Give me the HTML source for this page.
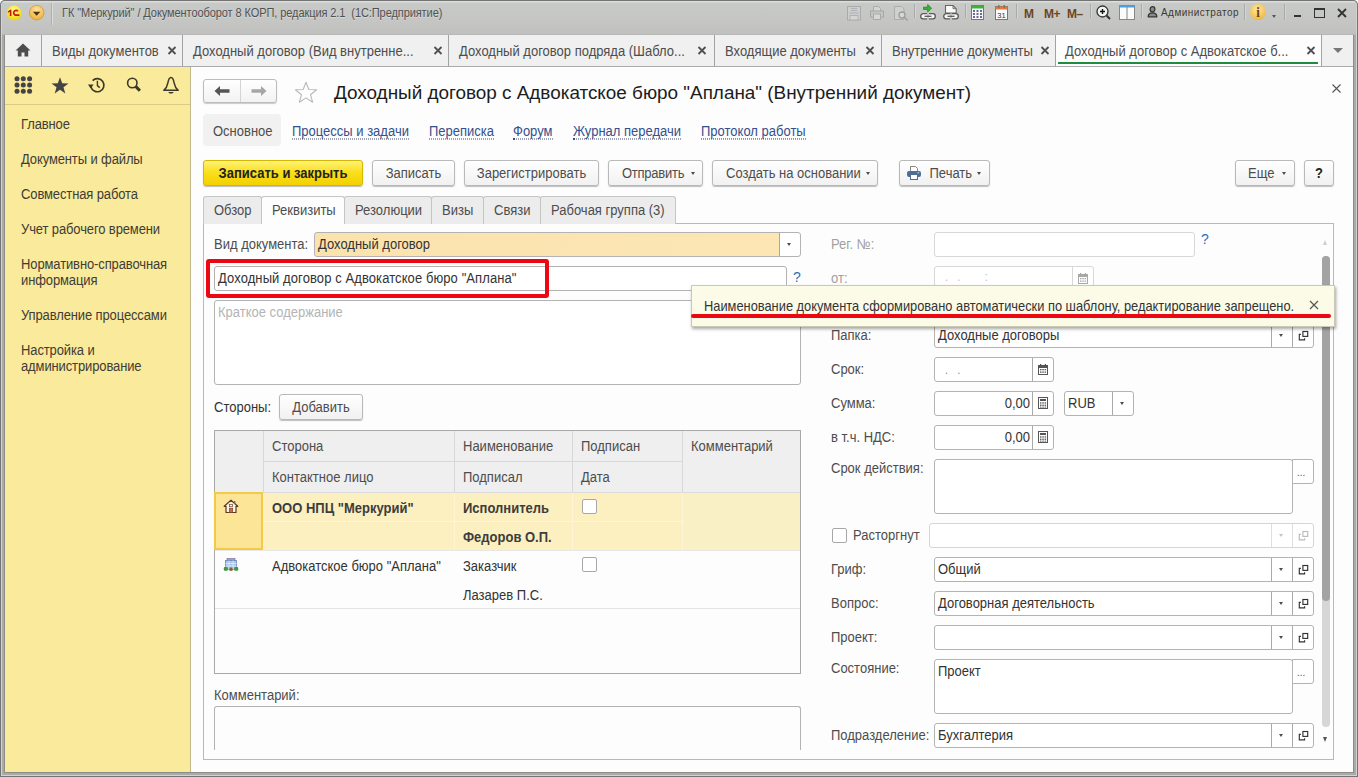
<!DOCTYPE html>
<html><head><meta charset="utf-8">
<style>
*{box-sizing:border-box;margin:0;padding:0}
html,body{width:1358px;height:777px;overflow:hidden;background:#fff}
body{position:relative;background:#fff;font-family:"Liberation Sans",sans-serif;font-size:13px;color:#4d4d4d}
.a{position:absolute}
.t{position:absolute;white-space:nowrap;line-height:16px;transform:translateY(0.8px) scaleY(1.1)}
#frame{left:0;top:0;width:1358px;height:777px;background:#a9abab;border-radius:5px 5px 0 0;box-shadow:inset 0 0 0 1px #747474,inset 0 0 0 2px #d2d4d4}
#titlebar{left:2px;top:1px;width:1354px;height:34px;background:linear-gradient(#dcdedc 0,#dcdedc 1px,#c8cac7 2px,#c5c6c4 60%,#c0c1bf 100%);border-bottom:1px solid #b7b8b6;border-radius:4px 4px 0 0}
#inner{left:4px;top:35px;width:1350px;height:738px;background:#8d8d86}
#tabbar{left:5px;top:35px;width:1348px;height:32px;background:#f0f0f0;border-bottom:1px solid #ababab}
.tsep{position:absolute;top:0;width:1px;height:31px;background:#a2a2a2}
#sidebar{left:5px;top:67px;width:186px;height:705px;background:#faea9b;border-right:1px solid #c2b98e}
#main{left:191px;top:67px;width:1162px;height:705px;background:#fdfdfd}
.btn{position:absolute;height:26px;border:1px solid #b9b9b9;border-radius:3px;background:linear-gradient(#ffffff,#f1f1f1);box-shadow:0 1px 1px rgba(0,0,0,.25);text-align:center;line-height:23px;color:#4d4d4d}
.fld{position:absolute;height:24px;border:1px solid #b3b3b3;border-radius:3px;background:#fff}
.lbl{position:absolute;white-space:nowrap;line-height:16px;color:#4d4d4d;transform:translateY(0.8px) scaleY(1.1)}
.lnk{position:absolute;white-space:nowrap;color:#34508e;line-height:13px;border-bottom:1px dotted #3e4c78;transform:translateY(0.8px) scaleY(1.1)}
.tab>span,.btn>span{display:inline-block;transform:translateY(0.8px) scaleY(1.1)}
.tab{position:absolute;top:196px;height:28px;border:1px solid #c5c5c5;border-bottom:none;border-radius:3px 3px 0 0;background:#ececec;text-align:center;line-height:26px;color:#4d4d4d}
.dd{position:absolute;width:0;height:0;border-left:2.6px solid transparent;border-right:2.6px solid transparent;border-top:3.2px solid #4d4d4d}
</style></head><body>
<div id="frame" class="a"></div>
<div id="titlebar" class="a"></div>
<div id="inner" class="a"></div>
<div id="tabbar" class="a"></div>
<div id="sidebar" class="a"></div>
<div id="main" class="a"></div>

<!-- TITLE BAR CONTENT -->
<svg class="a" style="left:5px;top:4px" width="18" height="18" viewBox="0 0 18 18"><defs><radialGradient id="g1" cx="50%" cy="35%" r="60%"><stop offset="0" stop-color="#fffbb0"/><stop offset=".6" stop-color="#f8ea40"/><stop offset="1" stop-color="#f0d818"/></radialGradient><radialGradient id="g2" cx="50%" cy="30%" r="65%"><stop offset="0" stop-color="#fde2a0"/><stop offset=".7" stop-color="#f6c25a"/><stop offset="1" stop-color="#eeb040"/></radialGradient></defs><circle cx="9" cy="8.9" r="7.4" fill="url(#g1)"/><path d="M2.9 7.4L5.1 5.8h1.3v6.1H4.8V7.8L2.9 8.7z" fill="#c01404"/><path d="M12.9 7.3A2.4 2.4 0 1 0 10.3 11.1H14.4" fill="none" stroke="#c81a08" stroke-width="1.7"/></svg>
<svg class="a" style="left:28px;top:4px" width="18" height="18" viewBox="0 0 18 18"><circle cx="8.7" cy="8.7" r="7.3" fill="url(#g2)" stroke="#c89a48" stroke-width=".8"/><path d="M4.8 7.7h7.6l-3.8 4z" fill="#4a3412"/></svg>
<div class="a" style="left:51px;top:3px;width:1px;height:22px;background:#b0b0b0;box-shadow:1px 0 0 #dadada"></div>
<div class="t" style="left:62px;top:4px;font-size:11px;line-height:16px;color:#505050;letter-spacing:-0.08px;text-shadow:0 1px 0 rgba(255,255,255,.35)">ГК "Меркурий" / Документооборот 8 КОРП, редакция 2.1&nbsp; (1С:Предприятие)</div>

<!-- disabled icons -->
<svg class="a" style="left:846px;top:5px" width="16" height="16" viewBox="0 0 16 16"><rect x="1.5" y="1.5" width="13" height="13.5" fill="#cdcfcd" stroke="#a9aaa9"/><path d="M5 3.5h6M5 5.5h6M3 8h10" stroke="#b0b0b8" stroke-width="1"/><rect x="4" y="10.5" width="8" height="4.5" fill="#d4d6d4" stroke="#aaa" stroke-width=".8"/></svg>
<svg class="a" style="left:869px;top:5px" width="16" height="16" viewBox="0 0 16 16"><path d="M4.5 1.5h5l2 2v3h-7z" fill="#d4d6d4" stroke="#aaa"/><rect x="1.5" y="6" width="13" height="6" fill="#c4c6c4" stroke="#a6a6a6"/><rect x="4.5" y="9" width="7" height="5.5" fill="#d6d8d6" stroke="#aaa"/></svg>
<svg class="a" style="left:893px;top:5px" width="17" height="17" viewBox="0 0 17 17"><path d="M1.5 1.5h7l2.5 2.5v10.5H1.5z" fill="#cfd1cf" stroke="#acacac"/><circle cx="9" cy="10" r="3" fill="#d6d8d6" stroke="#9c9c9c" stroke-width="1.3"/><path d="M11.2 12.2l3.5 3.3" stroke="#a0a0a0" stroke-width="1.6"/></svg>
<div class="a" style="left:914px;top:4px;width:1px;height:14px;background:#a9a9a9;box-shadow:1px 0 0 #d5d5d5"></div>
<!-- link green -->
<svg class="a" style="left:920px;top:1px" width="16" height="20" viewBox="0 0 16 20"><path d="M3.5 6.2h4.2V3.6L11.6 7.3 7.7 11V8.4H3.5z" fill="#36b82e" stroke="#1f7a1a" stroke-width=".7"/><path d="M7 12.7H3.3a2.6 2.6 0 0 0 0 5.2H7M9 12.7h3.7a2.6 2.6 0 0 1 0 5.2H9" fill="#f6f6f6" stroke="#5a5a5a" stroke-width="1.3"/><path d="M4.5 15.3h7" stroke="#5a5a5a" stroke-width="1.3"/></svg><svg class="a" style="left:943px;top:1px" width="16" height="20" viewBox="0 0 16 20"><path d="M2.5 4.5h7.5l3.2 3.2V12H2.5z" fill="#fafafa" stroke="#666" stroke-width="1.1"/><path d="M10 4.5v3.2h3.2" fill="none" stroke="#666" stroke-width=".9"/><path d="M7 12.7H3.3a2.6 2.6 0 0 0 0 5.2H7M9 12.7h3.7a2.6 2.6 0 0 1 0 5.2H9" fill="#f6f6f6" stroke="#5a5a5a" stroke-width="1.3"/><path d="M4.5 15.3h7" stroke="#5a5a5a" stroke-width="1.3"/></svg>
<div class="a" style="left:965px;top:4px;width:1px;height:14px;background:#a9a9a9;box-shadow:1px 0 0 #d5d5d5"></div>
<!-- calendar green -->
<svg class="a" style="left:971px;top:5px" width="13" height="15" viewBox="0 0 13 15"><rect x=".5" y=".5" width="12" height="14" fill="#fafafa" stroke="#777"/><rect x=".5" y=".5" width="12" height="3" fill="#3cb43c"/><g fill="#6a6a9a"><rect x="2" y="5" width="2" height="2"/><rect x="5.5" y="5" width="2" height="2"/><rect x="9" y="5" width="2" height="2"/><rect x="2" y="8" width="2" height="2"/><rect x="5.5" y="8" width="2" height="2"/><rect x="9" y="8" width="2" height="2"/><rect x="2" y="11" width="2" height="2"/><rect x="5.5" y="11" width="2" height="2"/><rect x="9" y="11" width="2" height="2"/></g></svg>
<svg class="a" style="left:995px;top:5px" width="13" height="15" viewBox="0 0 13 15"><rect x=".5" y="1.5" width="12" height="13" fill="#fafafa" stroke="#777"/><rect x=".5" y="1.5" width="12" height="3" fill="#e07a3a"/><rect x="3" y="0" width="1.5" height="3" fill="#777"/><rect x="8.5" y="0" width="1.5" height="3" fill="#777"/><text x="6.5" y="12.8" font-family="Liberation Sans" font-size="7.5" text-anchor="middle" fill="#333">31</text></svg>
<div class="a" style="left:1016px;top:4px;width:1px;height:14px;background:#a9a9a9;box-shadow:1px 0 0 #d5d5d5"></div>
<div class="t" style="left:1024px;top:4.5px;font:bold 12px/16px 'Liberation Sans';color:#6e4520">M</div>
<div class="t" style="left:1044px;top:4.5px;font:bold 12px/16px 'Liberation Sans';color:#6e4520;letter-spacing:-0.5px">M+</div>
<div class="t" style="left:1067px;top:4.5px;font:bold 12px/16px 'Liberation Sans';color:#6e4520;letter-spacing:-0.5px">M–</div>
<div class="a" style="left:1090px;top:4px;width:1px;height:14px;background:#a9a9a9;box-shadow:1px 0 0 #d5d5d5"></div>
<svg class="a" style="left:1096px;top:5px" width="16" height="16" viewBox="0 0 16 16"><circle cx="6.5" cy="6.5" r="5.5" fill="#f4f4f4" stroke="#333" stroke-width="1.3"/><path d="M4 6.5h5M6.5 4v5" stroke="#111" stroke-width="1.4"/><path d="M10.5 10.5l3.5 3.5" stroke="#333" stroke-width="2"/></svg>
<svg class="a" style="left:1119px;top:5px" width="16" height="15" viewBox="0 0 16 15"><rect x=".5" y=".5" width="15" height="14" fill="#fbfbfb" stroke="#888"/><rect x=".5" y=".5" width="15" height="2" fill="#4aa0e0"/><path d="M8 2v12" stroke="#888"/></svg>
<div class="a" style="left:1141px;top:4px;width:1px;height:14px;background:#a9a9a9;box-shadow:1px 0 0 #d5d5d5"></div>
<svg class="a" style="left:1147px;top:6px" width="11" height="12" viewBox="0 0 11 12"><ellipse cx="5.5" cy="3.3" rx="2.4" ry="2.6" fill="#8a8a8a" stroke="#333" stroke-width="1.2"/><path d="M1.2 10.8c0-2.6 1.8-4 4.3-4s4.3 1.4 4.3 4z" fill="#8a8a8a" stroke="#333" stroke-width="1.3" stroke-linejoin="round"/></svg>
<div class="t" style="left:1161px;top:3.5px;font-size:10px;line-height:16px;color:#3f3b2c;letter-spacing:0.45px">Администратор</div>
<div class="a" style="left:1244px;top:4px;width:1px;height:16px;background:#a9a9a9;box-shadow:1px 0 0 #d5d5d5"></div>
<div class="a" style="left:1250px;top:4px;width:16px;height:16px;border-radius:50%;background:radial-gradient(circle at 45% 35%,#ffe7a0,#f3c050 65%,#d89a30);"></div>
<div class="t" style="left:1254px;top:4px;font:bold 13px/16px 'Liberation Serif';color:#6a4810;width:8px;text-align:center">i</div>
<div class="dd" style="left:1272px;top:15px;border-top:3px solid #555"></div>
<div class="a" style="left:1284px;top:4px;width:1px;height:16px;background:#a9a9a9;box-shadow:1px 0 0 #d5d5d5"></div>
<div class="a" style="left:1294px;top:15px;width:7px;height:2px;background:#333"></div>
<div class="a" style="left:1314px;top:8px;width:11px;height:10px;border:1.5px solid #333;border-top-width:2px"></div>
<svg class="a" style="left:1337px;top:8px" width="10" height="10" viewBox="0 0 10 10"><path d="M1 1l8 8M9 1l-8 8" stroke="#333" stroke-width="1.8"/></svg>

<!-- TAB BAR -->
<svg class="a" style="left:15px;top:43px" width="16" height="14" viewBox="0 0 16 14"><path d="M8 0.5L0.5 7.5h2.3V13.5h3.7V9.5h3V13.5h3.7V7.5h2.3z" fill="#4d4d4d"/></svg>
<div class="tsep" style="left:41px;top:35px"></div>
<div class="t" style="left:52px;top:43px;color:#4d4d4d">Виды документов</div>
<svg class="a" style="left:167px;top:46px" width="10" height="9" viewBox="0 0 10 9"><path d="M1.5 1l7 7M8.5 1l-7 7" stroke="#505050" stroke-width="1.8"/></svg>
<div class="tsep" style="left:182px;top:35px"></div>
<div class="t" style="left:193px;top:43px;color:#4d4d4d">Доходный договор (Вид внутренне...</div>
<svg class="a" style="left:433px;top:46px" width="10" height="9" viewBox="0 0 10 9"><path d="M1.5 1l7 7M8.5 1l-7 7" stroke="#505050" stroke-width="1.8"/></svg>
<div class="tsep" style="left:448px;top:35px"></div>
<div class="t" style="left:459px;top:43px;color:#4d4d4d">Доходный договор подряда (Шабло...</div>
<svg class="a" style="left:697px;top:46px" width="10" height="9" viewBox="0 0 10 9"><path d="M1.5 1l7 7M8.5 1l-7 7" stroke="#505050" stroke-width="1.8"/></svg>
<div class="tsep" style="left:714px;top:35px"></div>
<div class="t" style="left:725px;top:43px;color:#4d4d4d">Входящие документы</div>
<svg class="a" style="left:865px;top:46px" width="10" height="9" viewBox="0 0 10 9"><path d="M1.5 1l7 7M8.5 1l-7 7" stroke="#505050" stroke-width="1.8"/></svg>
<div class="tsep" style="left:881px;top:35px"></div>
<div class="t" style="left:892px;top:43px;color:#4d4d4d">Внутренние документы</div>
<svg class="a" style="left:1040px;top:46px" width="10" height="9" viewBox="0 0 10 9"><path d="M1.5 1l7 7M8.5 1l-7 7" stroke="#505050" stroke-width="1.8"/></svg>
<div class="a" style="left:1055px;top:35px;width:267px;height:31px;background:#fdfdfd;border-left:1px solid #a2a2a2;border-right:1px solid #a2a2a2"></div>
<div class="a" style="left:1058px;top:62px;width:260px;height:2px;background:#1f8c40"></div>
<div class="t" style="left:1065px;top:43px;color:#4d4d4d">Доходный договор с Адвокатское б...</div>
<svg class="a" style="left:1306px;top:46px" width="10" height="9" viewBox="0 0 10 9"><path d="M1.5 1l7 7M8.5 1l-7 7" stroke="#505050" stroke-width="1.8"/></svg>
<div class="dd" style="left:1333px;top:48px;border-left-width:5px;border-right-width:5px;border-top:5px solid #777"></div>

<!-- SIDEBAR -->
<div class="a" style="left:5px;top:104px;width:185px;height:1px;background:#d9c98a"></div>
<svg class="a" style="left:14px;top:76px" width="19" height="18" viewBox="0 0 19 18"><g fill="#444"><circle cx="3" cy="2.8" r="2.5"/><circle cx="9.3" cy="2.8" r="2.5"/><circle cx="15.6" cy="2.8" r="2.5"/><circle cx="3" cy="9" r="2.5"/><circle cx="9.3" cy="9" r="2.5"/><circle cx="15.6" cy="9" r="2.5"/><circle cx="3" cy="15.2" r="2.5"/><circle cx="9.3" cy="15.2" r="2.5"/><circle cx="15.6" cy="15.2" r="2.5"/></g></svg>
<svg class="a" style="left:51px;top:77px" width="18" height="17" viewBox="0 0 18 17"><path d="M9 0.3l2.2 5.9 6.3.2-5 3.9 1.8 6.1L9 12.8l-5.3 3.6 1.8-6.1-5-3.9 6.3-.2z" fill="#444"/></svg>
<svg class="a" style="left:88px;top:77px" width="18" height="17" viewBox="0 0 18 17"><path d="M4.6 3.6A6.6 6.6 0 1 1 2.9 9.6" fill="none" stroke="#3d3828" stroke-width="1.6"/><path d="M0 7.6h5.6L2.6 11.4z" fill="#3d3828"/><path d="M9.4 3.8V8.6l2.3 2" fill="none" stroke="#3d3828" stroke-width="1.4"/></svg>
<svg class="a" style="left:126px;top:76px" width="17" height="18" viewBox="0 0 17 18"><circle cx="6.3" cy="7" r="4.7" fill="none" stroke="#3d3828" stroke-width="1.6"/><path d="M9.7 10.4l4.2 4.4" stroke="#3d3828" stroke-width="3"/></svg>
<svg class="a" style="left:162px;top:76px" width="18" height="19" viewBox="0 0 18 19"><path d="M9 1.4C7.2 1.4 6.4 3.6 5.8 7.2 5.3 10.3 4.2 12.4 1.8 14.3H16.2C13.8 12.4 12.7 10.3 12.2 7.2 11.6 3.6 10.8 1.4 9 1.4Z" fill="none" stroke="#3d3828" stroke-width="1.5" stroke-linejoin="round"/><path d="M6.3 16.1h5.4c-.5 1.1-1.4 1.5-2.7 1.5s-2.2-.4-2.7-1.5z" fill="#3d3828"/></svg>
<div class="t" style="left:21px;top:116px;color:#3f3d35;letter-spacing:-0.12px">Главное</div>
<div class="t" style="left:21px;top:151px;color:#3f3d35;letter-spacing:-0.12px">Документы и файлы</div>
<div class="t" style="left:21px;top:186px;color:#3f3d35;letter-spacing:-0.12px">Совместная работа</div>
<div class="t" style="left:21px;top:221px;color:#3f3d35;letter-spacing:-0.12px">Учет рабочего времени</div>
<div class="t" style="left:21px;top:256px;color:#3f3d35;letter-spacing:-0.12px">Нормативно-справочная</div>
<div class="t" style="left:21px;top:272px;color:#3f3d35;letter-spacing:-0.12px">информация</div>
<div class="t" style="left:21px;top:307px;color:#3f3d35;letter-spacing:-0.12px">Управление процессами</div>
<div class="t" style="left:21px;top:342px;color:#3f3d35;letter-spacing:-0.12px">Настройка и</div>
<div class="t" style="left:21px;top:358px;color:#3f3d35;letter-spacing:-0.12px">администрирование</div>

<!-- FORM HEADER -->
<div class="a" style="left:203px;top:79px;width:74px;height:24px;border:1px solid #bcbcbc;border-radius:3px;background:linear-gradient(#fff,#f2f2f2);box-shadow:0 1px 1px rgba(0,0,0,.2)"></div>
<div class="a" style="left:240px;top:80px;width:1px;height:22px;background:#d4d4d4"></div>
<svg class="a" style="left:214px;top:85px" width="16" height="12" viewBox="0 0 16 12"><path d="M0.5 6L6 1v3.2h9.5v3.6H6V11z" fill="#555"/></svg>
<svg class="a" style="left:251px;top:85px" width="16" height="12" viewBox="0 0 16 12"><path d="M15.5 6L10 1v3.2H0.5v3.6H10V11z" fill="#a6a6a6"/></svg>
<svg class="a" style="left:294px;top:81px" width="24" height="23" viewBox="0 0 24 23"><path d="M12 1.2l2.8 7.3 7.8.3-6.1 4.9 2.1 7.5L12 16.9l-6.6 4.3 2.1-7.5-6.1-4.9 7.8-.3z" fill="#fdfdfd" stroke="#b9b9b9" stroke-width="1.1" stroke-linejoin="round"/></svg>
<div class="t" style="left:334px;top:81.5px;font-size:18.9px;line-height:22px;color:#1c1c1c;transform:none">Доходный договор с Адвокатское бюро "Аплана" (Внутренний документ)</div>
<svg class="a" style="left:1332px;top:84px" width="9" height="9" viewBox="0 0 9 9"><path d="M.5.5l8 8M8.5.5l-8 8" stroke="#555" stroke-width="1.1"/></svg>

<div class="a" style="left:203px;top:114px;width:78px;height:32px;border-radius:4px;background:#f1f1f1"></div>
<div class="t" style="left:213px;top:123px;color:#4d4d4d">Основное</div>
<div class="lnk" style="left:292px;top:123.8px">Процессы и задачи</div>
<div class="lnk" style="left:429px;top:123.8px">Переписка</div>
<div class="lnk" style="left:513px;top:123.8px">Форум</div>
<div class="lnk" style="left:573px;top:123.8px">Журнал передачи</div>
<div class="lnk" style="left:701px;top:123.8px">Протокол работы</div>

<!-- BUTTONS -->
<div class="btn" style="left:203px;top:160px;width:160px;border-color:#d6b700;background:linear-gradient(#fff27a,#fbe01e 45%,#f3d000);color:#222;font-weight:bold"><span>Записать и закрыть</span></div>
<div class="btn" style="left:372px;top:160px;width:83px"><span>Записать</span></div>
<div class="btn" style="left:464px;top:160px;width:135px"><span>Зарегистрировать</span></div>
<div class="btn" style="left:608px;top:160px;width:95px;text-align:left;padding-left:13px"><span style="letter-spacing:-0.25px">Отправить</span></div>
<div class="dd" style="left:690.5px;top:172px;border-top-width:3px"></div>
<div class="btn" style="left:712px;top:160px;width:166px;text-align:left;padding-left:13px"><span>Создать на основании</span></div>
<div class="dd" style="left:866px;top:172px;border-top-width:3px"></div>
<div class="btn" style="left:899px;top:160px;width:91px;text-align:left;padding-left:29.5px"><span>Печать</span></div>
<svg class="a" style="left:906px;top:165px" width="16" height="15" viewBox="0 0 16 15"><path d="M4.5 1.5H9.5L11.5 3.5V6.5H4.5Z" fill="#fff" stroke="#777" stroke-width=".9"/><rect x="1" y="6" width="14" height="6" rx="2" fill="#4f6d92"/><rect x="4.5" y="9.5" width="7" height="5" fill="#fff" stroke="#4f6d92" stroke-width="1"/><rect x="11.5" y="7.3" width="1.6" height="1" fill="#cfe0f0"/></svg>
<div class="dd" style="left:977px;top:172px;border-top-width:3px"></div>
<div class="btn" style="left:1235px;top:160px;width:60px;text-align:left;padding-left:12px"><span>Еще</span></div>
<div class="dd" style="left:1282px;top:172px;border-top-width:3px"></div>
<div class="btn" style="left:1304px;top:160px;width:30px;font-weight:bold;color:#222"><span>?</span></div>

<!-- FORM TABS -->
<div class="a" style="left:203px;top:223px;width:1131px;height:537px;border:1px solid #b9b9b9;background:#fdfdfd"></div>
<div class="tab" style="left:203px;width:59px;text-align:left;padding-left:10px"><span>Обзор</span></div>
<div class="tab" style="left:261px;width:84px;height:28px;background:#fdfdfd;text-align:left;padding-left:10px;z-index:1"><span>Реквизиты</span></div>
<div class="tab" style="left:344px;width:88px;text-align:left;padding-left:10px"><span>Резолюции</span></div>
<div class="tab" style="left:431px;width:53px;text-align:left;padding-left:10px"><span>Визы</span></div>
<div class="tab" style="left:483px;width:58px;text-align:left;padding-left:10px"><span>Связи</span></div>
<div class="tab" style="left:540px;width:136px;text-align:left;padding-left:10px"><span>Рабочая группа (3)</span></div>

<!-- LEFT COLUMN -->
<div class="lbl" style="left:214px;top:236px">Вид документа:</div>
<div class="fld" style="left:314px;top:232px;width:487px;height:25px;background:linear-gradient(90deg,#fbe3ae,#fce6b4);"></div>
<div class="a" style="left:779px;top:233px;width:21px;height:23px;background:#fff;border-left:1px solid #a9a9a9;border-radius:0 3px 3px 0"></div>
<div class="dd" style="left:787px;top:243px;border-top-width:3.2px"></div>
<div class="lbl" style="left:318px;top:236px;color:#333">Доходный договор</div>

<div class="fld" style="left:214px;top:266px;width:573px;height:25px"></div>
<div class="lbl" style="left:218px;top:270px;color:#333;letter-spacing:0.09px">Доходный договор с Адвокатское бюро "Аплана"</div>
<div class="a" style="left:206px;top:259px;width:343px;height:39px;border:4px solid #ec0812;border-radius:3px"></div>
<div class="t" style="left:793px;top:268px;color:#2a6fb5;font-size:14px">?</div>

<div class="fld" style="left:214px;top:300px;width:587px;height:85px"></div>
<div class="lbl" style="left:218px;top:304px;color:#b4b4b4">Краткое содержание</div>

<div class="lbl" style="left:214px;top:399px;color:#333">Стороны:</div>
<div class="btn" style="left:279px;top:394px;width:84px"><span>Добавить</span></div>

<!-- TABLE -->
<div class="a" style="left:214px;top:430px;width:587px;height:244px;border:1px solid #a9a9a9;background:#fdfdfd"></div>
<div class="a" style="left:215px;top:431px;width:585px;height:61px;background:#efefef"></div>
<div class="a" style="left:263px;top:431px;width:1px;height:61px;background:#d8d8d8"></div>
<div class="a" style="left:454px;top:431px;width:1px;height:61px;background:#d8d8d8"></div>
<div class="a" style="left:572px;top:431px;width:1px;height:61px;background:#d8d8d8"></div>
<div class="a" style="left:682px;top:431px;width:1px;height:61px;background:#d8d8d8"></div>
<div class="a" style="left:263px;top:461px;width:419px;height:1px;background:#d8d8d8"></div>
<div class="a" style="left:215px;top:492px;width:585px;height:1px;background:#dcdcdc"></div>
<div class="lbl" style="left:272px;top:438px">Сторона</div>
<div class="lbl" style="left:463px;top:438px">Наименование</div>
<div class="lbl" style="left:581px;top:438px">Подписан</div>
<div class="lbl" style="left:691px;top:438px">Комментарий</div>
<div class="lbl" style="left:272px;top:469px">Контактное лицо</div>
<div class="lbl" style="left:463px;top:469px">Подписал</div>
<div class="lbl" style="left:581px;top:469px">Дата</div>

<div class="a" style="left:215px;top:493px;width:585px;height:57px;background:#fcefc0"></div>
<div class="a" style="left:683px;top:493px;width:117px;height:57px;background:#faf0c6"></div>
<div class="a" style="left:263px;top:521px;width:419px;height:1px;background:#fff6d8"></div>
<div class="a" style="left:454px;top:493px;width:1px;height:57px;background:#fff4d4"></div>
<div class="a" style="left:572px;top:493px;width:1px;height:57px;background:#fff4d4"></div>
<div class="a" style="left:682px;top:493px;width:1px;height:57px;background:#fff4d4"></div>
<div class="a" style="left:214px;top:492px;width:49px;height:58px;border:2px solid #f2ca48;background:#fde597"></div>
<div class="a" style="left:215px;top:550px;width:585px;height:1px;background:#e8e8e8"></div>
<div class="a" style="left:215px;top:608px;width:585px;height:1px;background:#e4e4e4"></div>

<svg class="a" style="left:223px;top:499px" width="16" height="15" viewBox="0 0 16 15"><path d="M8 1.2L1.2 7.3h1.8v6.2h10V7.3h1.8z" fill="#fbf1e6" stroke="#5a3a22" stroke-width="1.2" stroke-linejoin="round"/><rect x="11" y="2" width="1.4" height="3" fill="#8a6a50"/><rect x="6.6" y="5.5" width="2.8" height="2.2" fill="#fff" stroke="#6a4a30" stroke-width=".7"/><rect x="6.3" y="9.2" width="3.4" height="4.3" fill="#d06a40" stroke="#6a3a22" stroke-width=".6"/></svg>
<div class="t" style="left:272px;top:500px;font-weight:bold;color:#3d3d3d">ООО НПЦ "Меркурий"</div>
<div class="t" style="left:463px;top:500px;font-weight:bold;color:#3d3d3d">Исполнитель</div>
<div class="t" style="left:463px;top:529px;font-weight:bold;color:#3d3d3d">Федоров О.П.</div>
<div class="a" style="left:582px;top:499px;width:15px;height:15px;border:1px solid #a8a8a8;border-radius:2px;background:#fff"></div>

<svg class="a" style="left:223px;top:557px" width="16" height="15" viewBox="0 0 16 15"><rect x="4" y="1.5" width="8" height="2.5" fill="#a898c8" stroke="#7a6aa0" stroke-width=".6"/><rect x="2.5" y="3.5" width="11" height="9" fill="#a8c6ee" stroke="#6a88b8" stroke-width=".8"/><g stroke="#e8f0fa" stroke-width=".7"><path d="M2.5 6.5h11M2.5 9h11M6 3.5v9M10 3.5v9"/></g><rect x="0.8" y="10" width="4" height="3.8" rx="1" fill="#3f9a3a"/><rect x="11.2" y="10" width="4" height="3.8" rx="1" fill="#3f9a3a"/><rect x="6.5" y="10.5" width="3" height="3.3" fill="#8a5a3a"/></svg>
<div class="lbl" style="left:272px;top:558px;color:#333">Адвокатское бюро "Аплана"</div>
<div class="lbl" style="left:463px;top:558px;color:#333">Заказчик</div>
<div class="lbl" style="left:463px;top:587px;color:#333">Лазарев П.С.</div>
<div class="a" style="left:582px;top:557px;width:15px;height:15px;border:1px solid #a8a8a8;border-radius:2px;background:#fff"></div>

<div class="lbl" style="left:214px;top:687px;color:#4d4d4d">Комментарий:</div>
<div class="a" style="left:214px;top:706px;width:587px;height:44px;border:1px solid #b3b3b3;border-bottom:none;border-radius:3px 3px 0 0;background:#fdfdfd"></div>

<!-- RIGHT COLUMN -->
<div class="lbl" style="left:831px;top:236px;color:#a0a0a0">Рег. №:</div>
<div class="fld" style="left:934px;top:232px;width:261px;height:25px;background:#fff;border-color:#d8d8d8"></div>
<div class="t" style="left:1201px;top:230px;color:#2a6fb5;font-size:14px">?</div>
<div class="lbl" style="left:831px;top:270px;color:#a0a0a0">от:</div>
<div class="fld" style="left:934px;top:266px;width:160px;height:25px;background:#fff;border-color:#d8d8d8"></div>
<div class="a" style="left:1072px;top:267px;width:1px;height:23px;background:#d8d8d8"></div>
<div class="t" style="left:945px;top:268px;color:#bbb;font-size:11px">.&nbsp;&nbsp;&nbsp;.&nbsp;&nbsp;&nbsp;&nbsp;&nbsp;&nbsp;&nbsp;&nbsp;:</div>
<svg class="a" style="left:1078px;top:273px" width="10" height="11" viewBox="0 0 10 11"><rect x=".5" y="1.5" width="9" height="9" fill="none" stroke="#a8a8a8"/><rect x=".5" y="1.5" width="9" height="2.5" fill="#a8a8a8"/><rect x="2" y="0" width="1.3" height="2.5" fill="#a8a8a8"/><rect x="6.7" y="0" width="1.3" height="2.5" fill="#a8a8a8"/><g fill="#a8a8a8"><rect x="2" y="5" width="1.5" height="1.3"/><rect x="4.3" y="5" width="1.5" height="1.3"/><rect x="6.6" y="5" width="1.5" height="1.3"/><rect x="2" y="7.5" width="1.5" height="1.3"/><rect x="4.3" y="7.5" width="1.5" height="1.3"/><rect x="6.6" y="7.5" width="1.5" height="1.3"/></g></svg>
<div class="lbl" style="left:831px;top:327px;color:#4d4d4d">Папка:</div>
<div class="fld" style="left:934px;top:323px;width:380px;height:25px;background:#fff;border-color:#b3b3b3"></div>
<div class="a" style="left:1271px;top:324px;width:1px;height:23px;background:#a9a9a9"></div>
<div class="a" style="left:1292px;top:324px;width:1px;height:23px;background:#a9a9a9"></div>
<div class="lbl" style="left:938px;top:327px;color:#333">Доходные договоры</div>
<div class="dd" style="left:1279px;top:334px;border-top:3.2px solid #4d4d4d"></div>
<svg class="a" style="left:1297px;top:329px" width="12" height="12" viewBox="0 0 12 12"><path d="M3.9 5.4H2.3V10.8H7.6V9.3" fill="none" stroke="#333" stroke-width="1.15"/><rect x="5.9" y="2.5" width="4.8" height="4.9" fill="none" stroke="#333" stroke-width="1.15"/></svg>
<div class="lbl" style="left:831px;top:361px;color:#4d4d4d">Срок:</div>
<div class="fld" style="left:934px;top:357px;width:120px;height:25px;background:#fff;border-color:#b3b3b3"></div>
<div class="a" style="left:1032px;top:358px;width:1px;height:23px;background:#a9a9a9"></div>
<div class="t" style="left:945px;top:361px;color:#888;font-size:11px">.&nbsp;&nbsp;&nbsp;.</div>
<svg class="a" style="left:1038px;top:364px" width="10" height="11" viewBox="0 0 10 11"><rect x=".5" y="1.5" width="9" height="9" fill="none" stroke="#555"/><rect x=".5" y="1.5" width="9" height="2.5" fill="#555"/><rect x="2" y="0" width="1.3" height="2.5" fill="#555"/><rect x="6.7" y="0" width="1.3" height="2.5" fill="#555"/><g fill="#555"><rect x="2" y="5" width="1.5" height="1.3"/><rect x="4.3" y="5" width="1.5" height="1.3"/><rect x="6.6" y="5" width="1.5" height="1.3"/><rect x="2" y="7.5" width="1.5" height="1.3"/><rect x="4.3" y="7.5" width="1.5" height="1.3"/><rect x="6.6" y="7.5" width="1.5" height="1.3"/></g></svg>
<div class="lbl" style="left:831px;top:395px;color:#4d4d4d">Сумма:</div>
<div class="fld" style="left:934px;top:391px;width:120px;height:25px;background:#fff;border-color:#b3b3b3"></div>
<div class="a" style="left:1032px;top:392px;width:1px;height:23px;background:#a9a9a9"></div>
<div class="lbl" style="left:990px;top:395px;width:40px;text-align:right;color:#333">0,00</div>
<svg class="a" style="left:1038px;top:397px" width="10" height="12" viewBox="0 0 10 12"><rect x=".5" y=".5" width="9" height="11" fill="none" stroke="#555"/><rect x="2" y="2" width="6" height="2" fill="#555"/><g fill="#555"><rect x="2" y="5.3" width="1.5" height="1.3"/><rect x="4.3" y="5.3" width="1.5" height="1.3"/><rect x="6.6" y="5.3" width="1.5" height="1.3"/><rect x="2" y="7.6" width="1.5" height="1.3"/><rect x="4.3" y="7.6" width="1.5" height="1.3"/><rect x="6.6" y="7.6" width="1.5" height="1.3"/><rect x="2" y="9.6" width="1.5" height="1"/><rect x="4.3" y="9.6" width="1.5" height="1"/><rect x="6.6" y="9.6" width="1.5" height="1"/></g></svg>
<div class="fld" style="left:1064px;top:391px;width:70px;height:25px;background:#fff;border-color:#b3b3b3"></div>
<div class="a" style="left:1112px;top:392px;width:1px;height:23px;background:#a9a9a9"></div>
<div class="lbl" style="left:1068px;top:395px;color:#333">RUB</div>
<div class="dd" style="left:1120px;top:402px;border-top:3.2px solid #4d4d4d"></div>
<div class="lbl" style="left:831px;top:429px;color:#4d4d4d">в т.ч. НДС:</div>
<div class="fld" style="left:934px;top:425px;width:120px;height:25px;background:#fff;border-color:#b3b3b3"></div>
<div class="a" style="left:1032px;top:426px;width:1px;height:23px;background:#a9a9a9"></div>
<div class="lbl" style="left:990px;top:429px;width:40px;text-align:right;color:#333">0,00</div>
<svg class="a" style="left:1038px;top:431px" width="10" height="12" viewBox="0 0 10 12"><rect x=".5" y=".5" width="9" height="11" fill="none" stroke="#555"/><rect x="2" y="2" width="6" height="2" fill="#555"/><g fill="#555"><rect x="2" y="5.3" width="1.5" height="1.3"/><rect x="4.3" y="5.3" width="1.5" height="1.3"/><rect x="6.6" y="5.3" width="1.5" height="1.3"/><rect x="2" y="7.6" width="1.5" height="1.3"/><rect x="4.3" y="7.6" width="1.5" height="1.3"/><rect x="6.6" y="7.6" width="1.5" height="1.3"/><rect x="2" y="9.6" width="1.5" height="1"/><rect x="4.3" y="9.6" width="1.5" height="1"/><rect x="6.6" y="9.6" width="1.5" height="1"/></g></svg>
<div class="lbl" style="left:831px;top:460px;color:#4d4d4d">Срок действия:</div>
<div class="fld" style="left:934px;top:459px;width:359px;height:55px;background:#fff;border-color:#b3b3b3"></div>
<div class="fld" style="left:1292px;top:459px;width:22px;height:25px;border-radius:0 3px 3px 0"></div>
<div class="t" style="left:1297px;top:463.5px;color:#555;font-size:10px">...</div>
<div class="a" style="left:832px;top:528px;width:15px;height:15px;border:1px solid #a8a8a8;border-radius:2px;background:#fff"></div>
<div class="lbl" style="left:853px;top:527px;color:#4d4d4d">Расторгнут</div>
<div class="fld" style="left:929px;top:523px;width:385px;height:25px;background:#fff;border-color:#d6d6d6"></div>
<div class="a" style="left:1271px;top:524px;width:1px;height:23px;background:#dedede"></div>
<div class="a" style="left:1292px;top:524px;width:1px;height:23px;background:#dedede"></div>
<div class="dd" style="left:1279px;top:534px;border-top:3.2px solid #c4c4c4"></div>
<svg class="a" style="left:1297px;top:529px" width="12" height="12" viewBox="0 0 12 12"><path d="M3.9 5.4H2.3V10.8H7.6V9.3" fill="none" stroke="#bbb" stroke-width="1.15"/><rect x="5.9" y="2.5" width="4.8" height="4.9" fill="none" stroke="#bbb" stroke-width="1.15"/></svg>
<div class="lbl" style="left:831px;top:561px;color:#4d4d4d">Гриф:</div>
<div class="fld" style="left:934px;top:557px;width:380px;height:25px;background:#fff;border-color:#b3b3b3"></div>
<div class="a" style="left:1271px;top:558px;width:1px;height:23px;background:#a9a9a9"></div>
<div class="a" style="left:1292px;top:558px;width:1px;height:23px;background:#a9a9a9"></div>
<div class="lbl" style="left:938px;top:561px;color:#333">Общий</div>
<div class="dd" style="left:1279px;top:568px;border-top:3.2px solid #4d4d4d"></div>
<svg class="a" style="left:1297px;top:563px" width="12" height="12" viewBox="0 0 12 12"><path d="M3.9 5.4H2.3V10.8H7.6V9.3" fill="none" stroke="#333" stroke-width="1.15"/><rect x="5.9" y="2.5" width="4.8" height="4.9" fill="none" stroke="#333" stroke-width="1.15"/></svg>
<div class="lbl" style="left:831px;top:595px;color:#4d4d4d">Вопрос:</div>
<div class="fld" style="left:934px;top:591px;width:380px;height:25px;background:#fff;border-color:#b3b3b3"></div>
<div class="a" style="left:1271px;top:592px;width:1px;height:23px;background:#a9a9a9"></div>
<div class="a" style="left:1292px;top:592px;width:1px;height:23px;background:#a9a9a9"></div>
<div class="lbl" style="left:938px;top:595px;color:#333">Договорная деятельность</div>
<div class="dd" style="left:1279px;top:602px;border-top:3.2px solid #4d4d4d"></div>
<svg class="a" style="left:1297px;top:597px" width="12" height="12" viewBox="0 0 12 12"><path d="M3.9 5.4H2.3V10.8H7.6V9.3" fill="none" stroke="#333" stroke-width="1.15"/><rect x="5.9" y="2.5" width="4.8" height="4.9" fill="none" stroke="#333" stroke-width="1.15"/></svg>
<div class="lbl" style="left:831px;top:629px;color:#4d4d4d">Проект:</div>
<div class="fld" style="left:934px;top:625px;width:380px;height:25px;background:#fff;border-color:#b3b3b3"></div>
<div class="a" style="left:1271px;top:626px;width:1px;height:23px;background:#a9a9a9"></div>
<div class="a" style="left:1292px;top:626px;width:1px;height:23px;background:#a9a9a9"></div>
<div class="dd" style="left:1279px;top:636px;border-top:3.2px solid #4d4d4d"></div>
<svg class="a" style="left:1297px;top:631px" width="12" height="12" viewBox="0 0 12 12"><path d="M3.9 5.4H2.3V10.8H7.6V9.3" fill="none" stroke="#333" stroke-width="1.15"/><rect x="5.9" y="2.5" width="4.8" height="4.9" fill="none" stroke="#333" stroke-width="1.15"/></svg>
<div class="lbl" style="left:831px;top:660px;color:#4d4d4d">Состояние:</div>
<div class="fld" style="left:934px;top:659px;width:359px;height:55px;background:#fff;border-color:#b3b3b3"></div>
<div class="lbl" style="left:938px;top:663px;color:#333">Проект</div>
<div class="fld" style="left:1292px;top:659px;width:22px;height:25px;border-radius:0 3px 3px 0"></div>
<div class="t" style="left:1297px;top:663.5px;color:#555;font-size:10px">...</div>
<div class="lbl" style="left:831px;top:727px;color:#4d4d4d">Подразделение:</div>
<div class="fld" style="left:934px;top:723px;width:380px;height:25px;background:#fff;border-color:#b3b3b3"></div>
<div class="a" style="left:1271px;top:724px;width:1px;height:23px;background:#a9a9a9"></div>
<div class="a" style="left:1292px;top:724px;width:1px;height:23px;background:#a9a9a9"></div>
<div class="lbl" style="left:938px;top:727px;color:#333">Бухгалтерия</div>
<div class="dd" style="left:1279px;top:734px;border-top:3.2px solid #4d4d4d"></div>
<svg class="a" style="left:1297px;top:729px" width="12" height="12" viewBox="0 0 12 12"><path d="M3.9 5.4H2.3V10.8H7.6V9.3" fill="none" stroke="#333" stroke-width="1.15"/><rect x="5.9" y="2.5" width="4.8" height="4.9" fill="none" stroke="#333" stroke-width="1.15"/></svg>

<!-- SCROLLBAR -->
<div class="a" style="left:1322px;top:256px;width:8px;height:471px;border-radius:4px;background:#d6d6d6"></div>
<div class="a" style="left:1322px;top:256px;width:8px;height:345px;border-radius:4px;background:#a3a3a3"></div>
<div class="dd" style="left:1322.5px;top:240px;border-top:none;border-bottom:5px solid #cfcfcf"></div>
<div class="dd" style="left:1322.5px;top:737px;border-top:5px solid #555"></div>

<!-- TOOLTIP -->
<div class="a" style="left:691px;top:285px;width:644px;height:42px;background:#fbfbe8;border:1px solid #c9c9b4;box-shadow:1px 2px 3px rgba(0,0,0,.35)"></div>
<div class="t" style="left:704px;top:298px;font-size:12.85px;color:#333">Наименование документа сформировано автоматически по шаблону, редактирование запрещено.</div>
<svg class="a" style="left:1309px;top:300px" width="10" height="10" viewBox="0 0 10 10"><path d="M1 1l8 8M9 1l-8 8" stroke="#555" stroke-width="1.2"/></svg>
<div class="a" style="left:691px;top:314px;width:640px;height:4px;background:#ec0812;border-radius:2px"></div>
</body></html>
